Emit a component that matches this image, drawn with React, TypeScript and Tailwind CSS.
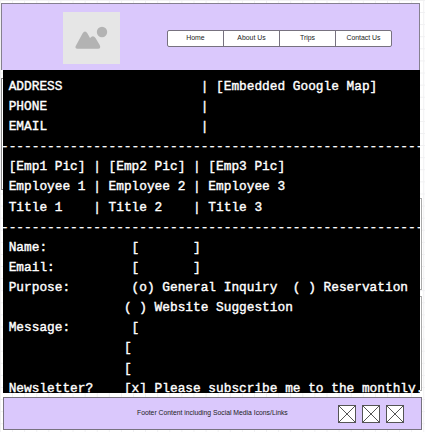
const lines = [
  "ADDRESS                  | [Embedded Google Map]",
  "PHONE                    |",
  "EMAIL                    |",
  "-",
  "[Emp1 Pic] | [Emp2 Pic] | [Emp3 Pic]",
  "Employee 1 | Employee 2 | Employee 3",
  "Title 1    | Title 2    | Title 3",
  "-",
  "Name:           [       ]",
  "Email:          [       ]",
  "Purpose:        (o) General Inquiry  ( ) Reservation",
  "               ( ) Website Suggestion",
  "Message:        [",
  "               [",
  "               [",
  "Newsletter?    [x] Please subscribe me to the monthly.",
];

const navItems = ["Home", "About Us", "Trips", "Contact Us"];

function ImagePlaceholder() {
  return (
    <div className="mt-[8px] ml-[61px] h-[52px] w-[57px] bg-[#e6e6e6]">
      <svg viewBox="0 0 57 52" className="h-full w-full" fill="#b3b3b3">
        <circle cx="39" cy="20" r="5.2" />
        <path d="M13 33.5 L19.5 21.5 Q22 17.5 24.5 21.5 L27 26 Q30 22.5 32.5 26 L36.7 33 Q38.2 36.5 35.2 36.7 L14.5 36.7 Q11.3 36.5 13 33.5Z" />
      </svg>
    </div>
  );
}

function SocialBox() {
  return (
    <svg viewBox="0 0 18 18" className="h-[18px] w-[18px] bg-white" fill="none" stroke="#555" strokeWidth="1">
      <rect x="0.5" y="0.5" width="17" height="17" />
      <path d="M0.5 0.5 L17.5 17.5 M17.5 0.5 L0.5 17.5" />
    </svg>
  );
}

export default function App() {
  return (
    <div className="relative h-[432px] w-[425px] overflow-hidden bg-white bg-[linear-gradient(to_right,#f0f0f2_1px,transparent_1px),linear-gradient(to_bottom,#f0f0f2_1px,transparent_1px)] bg-[size:12.1px_12.1px] font-['Liberation_Sans',Arial,sans-serif]">
      <div className="absolute top-[78px] left-[1px] h-[112px] w-[4px] border border-[#888] bg-white" />
      <div className="absolute top-[198px] left-[417px] h-[92px] w-[5px] border border-[#aaa] bg-white" />
      <div className="absolute top-[296px] left-[417px] h-[95px] w-[5px] border border-[#aaa] bg-white" />
      <div className="relative flex h-full flex-col">
        <header className="mt-[3px] ml-[1px] flex h-[67px] w-[419px] shrink-0 border border-b-0 border-[#85808f] bg-[#dac8fc]">
          <ImagePlaceholder />
          <nav className="mt-[26px] ml-[47px] flex h-[17px] w-[225px] rounded-[2px] border border-[#77727f] bg-white text-[6.9px] text-[#222]">
            {navItems.map((item) => (
              <a key={item} className="flex flex-1 items-center justify-center border-r border-[#77727f] last:border-r-0">
                {item}
              </a>
            ))}
          </nav>
        </header>
        <main className="ml-[3px] h-[323px] w-[417px] shrink-0 overflow-hidden bg-black pt-[6.8px] pl-[5.7px] font-['Liberation_Mono',monospace] text-[12.8px] text-white [-webkit-text-stroke:0.4px_white]">
          {lines.map((line, i) => (
            <div key={i} className={`h-[20.13px] leading-[20.13px] whitespace-pre ${line === "-" ? "-ml-[7.7px]" : ""}`}>
              {line === "-" ? "-".repeat(55) : line}
            </div>
          ))}
        </main>
        <footer className="mt-[4px] ml-[3px] flex h-[33px] w-[419px] shrink-0 items-center border border-[#77727f] bg-[#dac8fc] text-[6.8px] text-[#222]">
          <span className="ml-[133px] w-[152px] whitespace-nowrap">Footer Content including Social Media Icons/Links</span>
          <div className="ml-[49px] flex gap-[6px]">
            <SocialBox />
            <SocialBox />
            <SocialBox />
          </div>
        </footer>
      </div>
    </div>
  );
}
